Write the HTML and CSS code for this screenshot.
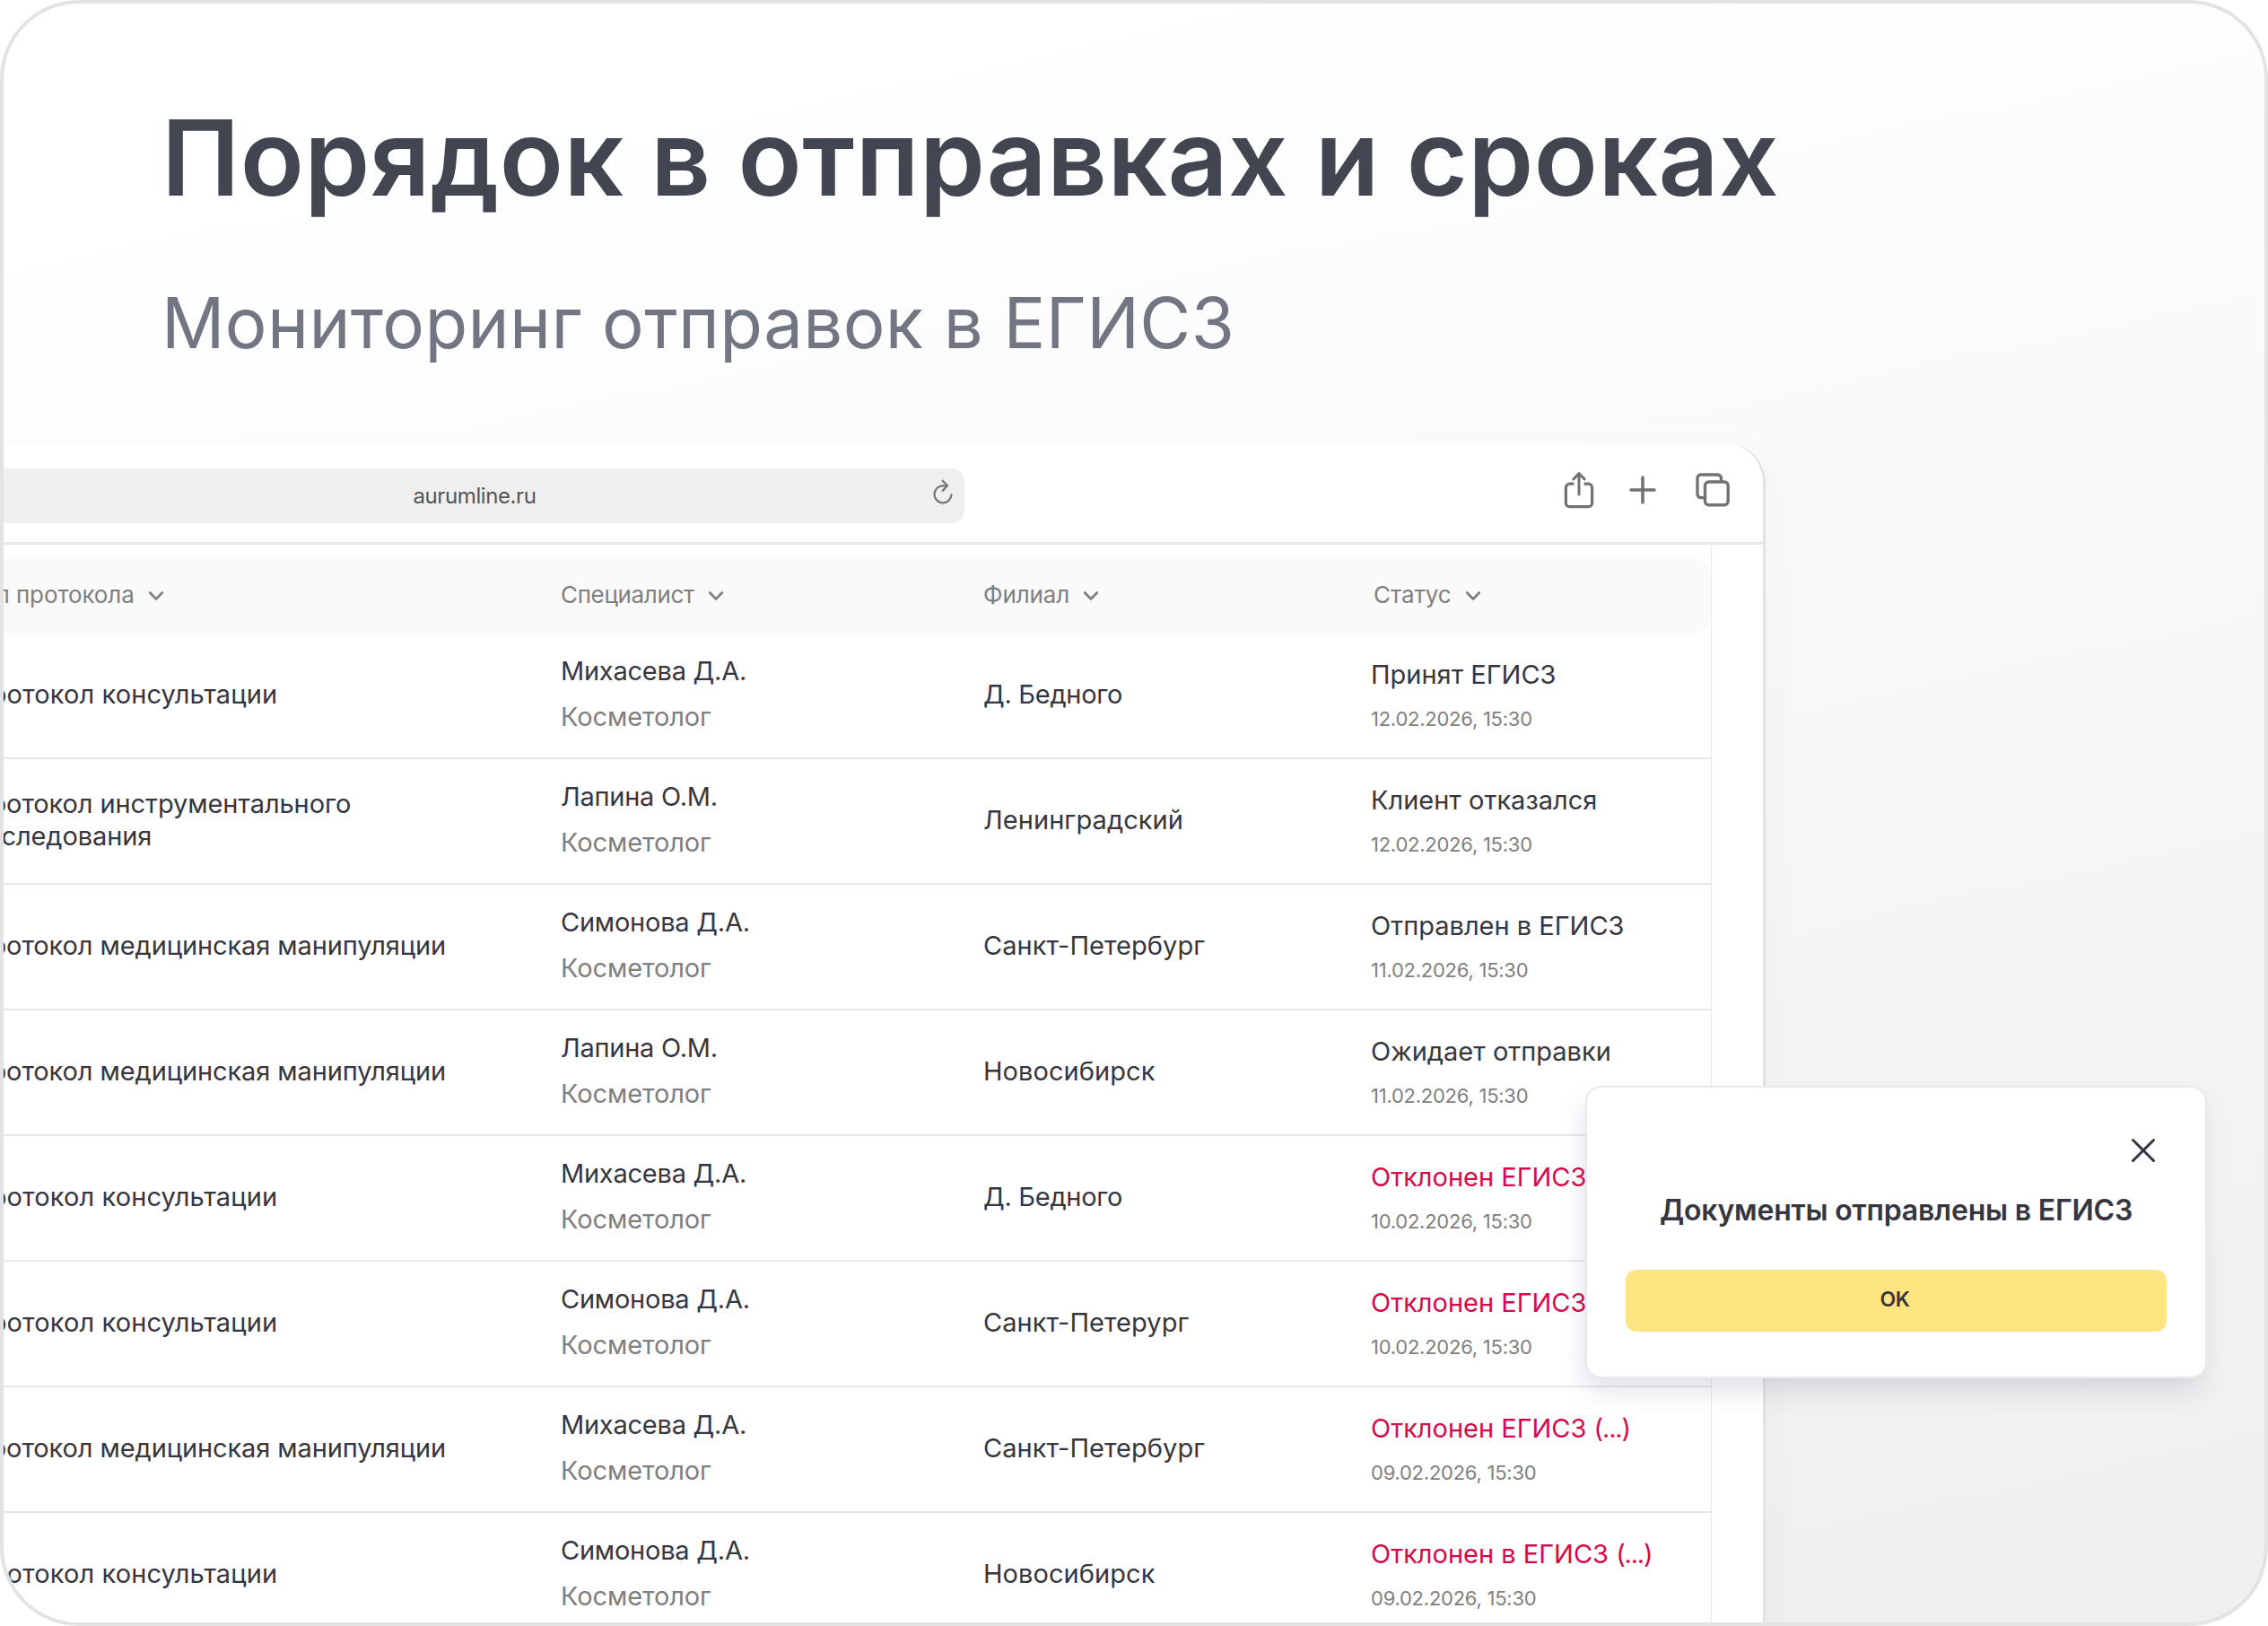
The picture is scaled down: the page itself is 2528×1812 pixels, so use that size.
FILE: index.html
```html
<!doctype html>
<html lang="ru">
<head>
<meta charset="utf-8">
<title>Мониторинг отправок в ЕГИСЗ</title>
<link rel="stylesheet" href="styles.css">
</head>
<body>
<svg width="0" height="0" class="sprite">
  <symbol id="chevron" viewBox="0 0 18 18">
    <path d="M2.200 5.500l6.800 7 6.800-7" fill="none" stroke="currentColor" stroke-width="2.700" stroke-linecap="round" stroke-linejoin="round"/>
  </symbol>
</svg>

<main class="frame">
  <header class="intro">
    <h1>Порядок в отправках и сроках</h1>
    <p>Мониторинг отправок в ЕГИСЗ</p>
  </header>

  <section class="browser">
    <div class="toolbar">
      <div class="address">
        <span class="url">aurumline.ru</span>
        <svg class="reload" width="24" height="30" viewBox="0 0 24 30" fill="none" stroke="#777" stroke-width="2.300" stroke-linecap="round" stroke-linejoin="round">
          <path d="M21.500 18.300A9.500 9.500 0 1 1 12 8.300h4.600"/>
          <path d="M11.700 2.800l5.300 5.500-5.300 5.600"/>
        </svg>
      </div>
      <div class="tools">
        <svg class="share" width="34" height="42" viewBox="0 0 34 42" fill="none" stroke="#727272" stroke-width="3.2" stroke-linecap="round" stroke-linejoin="round">
          <path stroke-linecap="butt" d="M11.4 14.2H6.6a4.2 4.2 0 0 0-4.2 4.2v17a4.2 4.2 0 0 0 4.2 4.2h20.8a4.2 4.2 0 0 0 4.2-4.2v-17a4.2 4.2 0 0 0-4.2-4.2h-4.8"/>
          <path stroke-width="3" d="M17 26V3M10.8 9L17 2.6 23.2 9"/>
        </svg>
        <svg class="plus" width="30" height="32" viewBox="0 0 30 32" fill="none" stroke="#727272" stroke-width="3.6" stroke-linecap="round">
          <path d="M15 2v28M2 16h26"/>
        </svg>
        <svg class="copy" width="38" height="38" viewBox="0 0 38 38" fill="none" stroke="#727272" stroke-width="3.4">
          <path d="M9.8 27.6H6a4 4 0 0 1-4-4V6a4 4 0 0 1 4-4h18.5a4 4 0 0 1 4 4v4.2"/>
          <rect x="10.500" y="10" width="25.700" height="25.700" rx="4.200"/>
        </svg>
      </div>
    </div>

    <div class="table">
      <div class="row head">
        <div class="first">Тип протокола <svg class="chevron"><use href="#chevron"/></svg></div>
        <div class="wide">Специалист <svg class="chevron"><use href="#chevron"/></svg></div>
        <div>Филиал <svg class="chevron"><use href="#chevron"/></svg></div>
        <div class="status-head">Статус <svg class="chevron"><use href="#chevron"/></svg></div>
      </div>

      <div class="row">
        <div class="type">Протокол консультации</div>
        <div class="person"><b>Михасева Д.А.</b><span>Косметолог</span></div>
        <div class="branch abbr">Д. Бедного</div>
        <div class="status"><b>Принят ЕГИСЗ</b><time>12.02.2026, 15:30</time></div>
      </div>
      <div class="row">
        <div class="type long">Протокол инструментального<br>исследования</div>
        <div class="person"><b>Лапина О.М.</b><span>Косметолог</span></div>
        <div class="branch">Ленинградский</div>
        <div class="status"><b>Клиент отказался</b><time>12.02.2026, 15:30</time></div>
      </div>
      <div class="row">
        <div class="type long">Протокол медицинская манипуляции</div>
        <div class="person"><b>Симонова Д.А.</b><span>Косметолог</span></div>
        <div class="branch">Санкт-Петербург</div>
        <div class="status"><b>Отправлен в ЕГИСЗ</b><time>11.02.2026, 15:30</time></div>
      </div>
      <div class="row">
        <div class="type long">Протокол медицинская манипуляции</div>
        <div class="person"><b>Лапина О.М.</b><span>Косметолог</span></div>
        <div class="branch">Новосибирск</div>
        <div class="status"><b>Ожидает отправки</b><time>11.02.2026, 15:30</time></div>
      </div>
      <div class="row">
        <div class="type">Протокол консультации</div>
        <div class="person"><b>Михасева Д.А.</b><span>Косметолог</span></div>
        <div class="branch abbr">Д. Бедного</div>
        <div class="status rejected"><b>Отклонен ЕГИСЗ</b><time>10.02.2026, 15:30</time></div>
      </div>
      <div class="row">
        <div class="type">Протокол консультации</div>
        <div class="person"><b>Симонова Д.А.</b><span>Косметолог</span></div>
        <div class="branch">Санкт-Петерург</div>
        <div class="status rejected"><b>Отклонен ЕГИСЗ</b><time>10.02.2026, 15:30</time></div>
      </div>
      <div class="row">
        <div class="type long">Протокол медицинская манипуляции</div>
        <div class="person"><b>Михасева Д.А.</b><span>Косметолог</span></div>
        <div class="branch">Санкт-Петербург</div>
        <div class="status rejected"><b>Отклонен ЕГИСЗ <i>(...)</i></b><time>09.02.2026, 15:30</time></div>
      </div>
      <div class="row">
        <div class="type">Протокол консультации</div>
        <div class="person"><b>Симонова Д.А.</b><span>Косметолог</span></div>
        <div class="branch">Новосибирск</div>
        <div class="status rejected"><b>Отклонен в ЕГИСЗ <i>(...)</i></b><time>09.02.2026, 15:30</time></div>
      </div>
    </div>
  </section>

  <div class="dialog" role="dialog">
    <svg class="close" width="28" height="28" viewBox="0 0 28 28" fill="none" stroke="#363640" stroke-width="3" stroke-linecap="round">
      <path d="M2.500 2.500l23 23M25.500 2.500l-23 23"/>
    </svg>
    <h2>Документы отправлены в ЕГИСЗ</h2>
    <button class="ok">OK</button>
  </div>
</main>
</body>
</html>
```
FILE: styles.css
```css
:root{
  --ink:#363640;
  --muted:#7f7f7f;
  --line:#e8e8e8;
  --frame:#e3e3e3;
  --red:#d40a4a;
  --yellow:#fee581;
}
*{box-sizing:border-box;margin:0;padding:0}
body{background:#fff;font-family:Inter,"Liberation Sans",sans-serif;color:var(--ink)}
.sprite{position:absolute}

.frame{
  position:relative;
  width:2528px;height:1812px;
  overflow:hidden;
  border:4px solid var(--frame);
  border-radius:88px;
  background:linear-gradient(168deg,#fff 10%,#fbfbfb 34%,#f4f4f4 70%,#efefef 100%);
}

.intro{padding:112px 0 0 176px}
.intro h1{font-size:117px;line-height:120px;font-weight:600;letter-spacing:.4px;color:#424650}
.intro p{margin-top:79px;font-size:78px;line-height:90px;letter-spacing:.35px;color:#727682}

/* browser window, its left part goes under the frame edge */
.browser{
  width:2020px;height:1400px;
  margin:89px 0 0 -56px;
  background:#fff;
  border-right:3px solid var(--frame);
  border-radius:0 44px 0 0;
  box-shadow:10px 10px 40px rgba(0,0,0,.025);
}
.toolbar{
  display:flex;align-items:flex-start;
  height:113px;padding:28px 37px 0 34px;
  border-bottom:3px solid var(--line);
}
.address{
  display:grid;grid-template-columns:1fr auto 1fr;align-items:center;
  width:1093px;height:61px;
  border-radius:14px;background:#efefef;
}
.url{grid-column:2;padding-left:1px;font-size:24px;letter-spacing:-.4px;color:#555}
.reload{justify-self:end;margin:0 12px 9px 0}
.tools{display:flex;align-items:center;margin:3px 0 0 auto}
.share{margin-right:39px}
.plus{margin-right:44px}

.table{width:1960px;padding-top:15px;border-right:1px solid #e9e9e9}
.row{
  display:grid;grid-template-columns:656px 472px 432px 1fr;align-items:center;
  height:140px;padding:0 0 3px 20px;
  border-bottom:2px solid var(--line);
  font-size:29px;line-height:36px;
}
.row.head{
  height:84px;padding-bottom:2px;
  border:0;border-radius:0 20px 20px 0;
  background:#fafafa;
  font-size:26px;color:var(--muted);
}
.head div{display:flex;align-items:center;letter-spacing:-.1px}
.head .first{margin-left:-3px}
.head .wide{padding-left:1px;letter-spacing:-.35px}
.head .status-head{padding-left:3px}
.chevron{width:18px;height:18px;margin:2px 0 0 15px}
.type{letter-spacing:.12px}
.type.long{letter-spacing:-.1px}
.branch{letter-spacing:.06px}
.branch.abbr{letter-spacing:-.3px}
.person,.status{display:flex;flex-direction:column}
.person{gap:15px;padding-left:1px}
.person b,.status b{font-weight:400}
.person b{letter-spacing:-.24px}
.person span{letter-spacing:-.1px;color:var(--muted)}
.status{gap:17px;padding-top:1px}
.status b{letter-spacing:0}
.status i{font-style:normal;letter-spacing:-1.2px}
.status time{font-size:22px;line-height:28px;letter-spacing:-.25px;color:var(--muted)}
.rejected b{color:var(--red)}

.dialog{
  position:absolute;left:1763px;top:1206px;
  display:flex;flex-direction:column;
  width:693px;height:326px;padding:56px 43px 0;
  border:2px solid #e9e9ec;border-radius:18px;
  background:#fff;
  box-shadow:-4px 16px 30px -4px rgba(80,95,140,.2);
}
.close{align-self:flex-end;margin-right:12px}
.dialog h2{margin-top:33px;font-size:32px;line-height:40px;font-weight:600;letter-spacing:-.19px;text-align:center}
.ok{
  height:69px;margin-top:46px;padding:0 3px 4px 0;
  border:0;border-radius:12px;
  background:var(--yellow);color:var(--ink);
  font:600 23px Inter,"Liberation Sans",sans-serif;letter-spacing:-.4px;
}
```
